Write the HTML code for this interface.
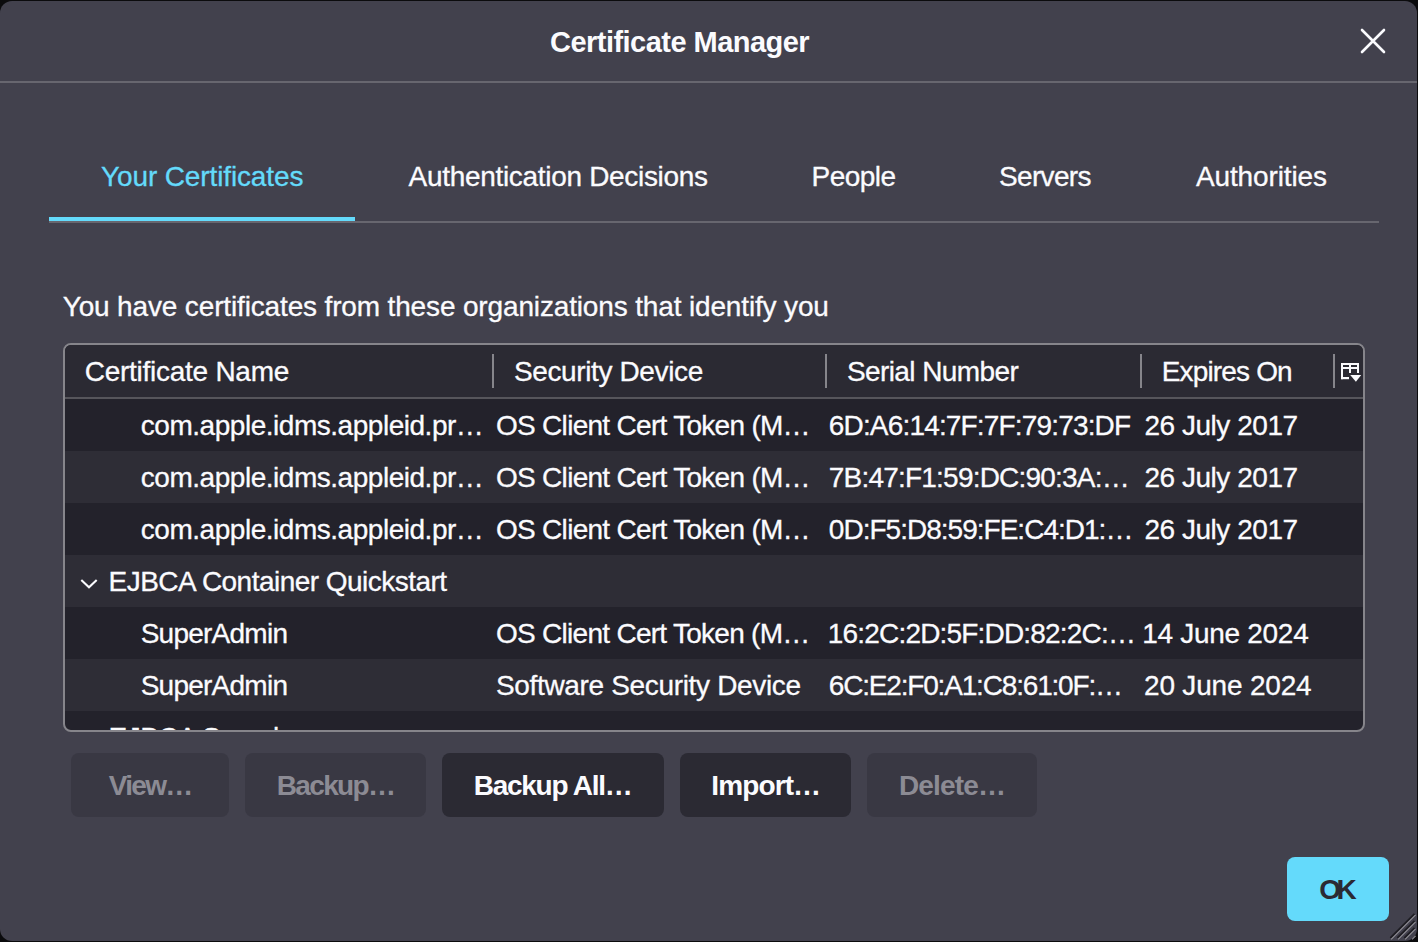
<!DOCTYPE html>
<html><head><meta charset="utf-8">
<style>
html,body{margin:0;padding:0;width:1418px;height:942px;overflow:hidden;background:#0b0b0d;}
*{box-sizing:border-box;}
body{font-family:"Liberation Sans",sans-serif;color:#fbfbfe;position:relative;}
.dlg{position:absolute;left:0;top:1px;width:1417px;height:940px;background:#42414d;border-radius:12px;}
.t{position:absolute;white-space:pre;line-height:1;}
.n{-webkit-text-stroke:0.3px currentColor;}
.r{position:absolute;}
</style></head>
<body>
<div class="dlg"></div>

<div class="r" style="left:0;top:81px;width:1417px;height:2px;background:#67666f"></div>
<div class="t" style="left:550.0px;top:27.9px;font-size:29px;font-weight:bold;color:#fbfbfe;letter-spacing:-0.528px">Certificate Manager</div>
<svg class="r" style="left:1356px;top:24px" width="34" height="34" viewBox="0 0 34 34"><path d="M6 6 L28 28 M28 6 L6 28" stroke="#fbfbfe" stroke-width="2.6" stroke-linecap="round"/></svg>
<div class="t n" style="left:101.0px;top:163.0px;font-size:28px;font-weight:normal;color:#64dafb;letter-spacing:-0.125px">Your Certificates</div>
<div class="t n" style="left:408.6px;top:163.0px;font-size:28px;font-weight:normal;color:#fbfbfe;letter-spacing:-0.313px">Authentication Decisions</div>
<div class="t n" style="left:811.5px;top:163.0px;font-size:28px;font-weight:normal;color:#fbfbfe;letter-spacing:-0.540px">People</div>
<div class="t n" style="left:999.0px;top:163.0px;font-size:28px;font-weight:normal;color:#fbfbfe;letter-spacing:-0.667px">Servers</div>
<div class="t n" style="left:1196.0px;top:163.0px;font-size:28px;font-weight:normal;color:#fbfbfe;letter-spacing:-0.140px">Authorities</div>
<div class="r" style="left:49px;top:221px;width:1330px;height:2px;background:#67666f"></div>
<div class="r" style="left:49px;top:217px;width:306px;height:4px;background:#64dafb"></div>
<div class="t n" style="left:62.7px;top:293.0px;font-size:28px;font-weight:normal;color:#fbfbfe;letter-spacing:-0.149px">You have certificates from these organizations that identify you</div>
<div class="r" style="left:63px;top:343px;width:1302px;height:389px;border:2px solid #86858b;border-radius:8px;background:#23222b;overflow:hidden">
<div class="r" style="left:0;top:0;width:1298px;height:52px;background:#2b2a33"></div>
<div class="r" style="left:0;top:52px;width:1298px;height:2px;background:#56555b"></div>
<div class="r" style="left:427px;top:9px;width:2px;height:34px;background:#86858b"></div>
<div class="r" style="left:760px;top:9px;width:2px;height:34px;background:#86858b"></div>
<div class="r" style="left:1075px;top:9px;width:2px;height:34px;background:#86858b"></div>
<div class="r" style="left:1268px;top:9px;width:2px;height:34px;background:#86858b"></div>
<div class="r" style="left:0;top:106px;width:1298px;height:52px;background:#2e2d36"></div>
<div class="r" style="left:0;top:210px;width:1298px;height:52px;background:#2e2d36"></div>
<div class="r" style="left:0;top:314px;width:1298px;height:52px;background:#2e2d36"></div>
<div class="t n" style="left:43.6px;top:378.9px;font-size:28px;color:#fbfbfe;letter-spacing:-0.532px">EJBCA Sample</div>
</div>
<svg class="r" style="left:1340px;top:362px" width="24" height="22" viewBox="0 0 24 22" fill="#fbfbfe"><rect x="1" y="1" width="18" height="2"/><rect x="1" y="5" width="18" height="2"/><rect x="1" y="1" width="2" height="16.2"/><rect x="9" y="1" width="2" height="10"/><rect x="17" y="1" width="2" height="10"/><rect x="1" y="15" width="8" height="2.2"/><path d="M10.2 13 H21.2 L15.9 19.7 Z"/></svg>
<div class="t n" style="left:84.7px;top:357.7px;font-size:28px;font-weight:normal;color:#fbfbfe;letter-spacing:-0.260px">Certificate Name</div>
<div class="t n" style="left:513.9px;top:357.7px;font-size:28px;font-weight:normal;color:#fbfbfe;letter-spacing:-0.371px">Security Device</div>
<div class="t n" style="left:846.9px;top:357.7px;font-size:28px;font-weight:normal;color:#fbfbfe;letter-spacing:-0.583px">Serial Number</div>
<div class="t n" style="left:1161.7px;top:357.7px;font-size:28px;font-weight:normal;color:#fbfbfe;letter-spacing:-0.833px">Expires On</div>
<div class="t n" style="left:140.8px;top:411.6px;font-size:28px;font-weight:normal;color:#fbfbfe;letter-spacing:-0.472px">com.apple.idms.appleid.pr…</div>
<div class="t n" style="left:496.0px;top:411.6px;font-size:28px;font-weight:normal;color:#fbfbfe;letter-spacing:-0.709px">OS Client Cert Token (M…</div>
<div class="t n" style="left:1144.4px;top:411.6px;font-size:28px;font-weight:normal;color:#fbfbfe;letter-spacing:-0.464px">26 July 2017</div>
<div class="t n" style="left:140.8px;top:463.6px;font-size:28px;font-weight:normal;color:#fbfbfe;letter-spacing:-0.472px">com.apple.idms.appleid.pr…</div>
<div class="t n" style="left:496.0px;top:463.6px;font-size:28px;font-weight:normal;color:#fbfbfe;letter-spacing:-0.709px">OS Client Cert Token (M…</div>
<div class="t n" style="left:1144.4px;top:463.6px;font-size:28px;font-weight:normal;color:#fbfbfe;letter-spacing:-0.464px">26 July 2017</div>
<div class="t n" style="left:140.8px;top:515.6px;font-size:28px;font-weight:normal;color:#fbfbfe;letter-spacing:-0.472px">com.apple.idms.appleid.pr…</div>
<div class="t n" style="left:496.0px;top:515.6px;font-size:28px;font-weight:normal;color:#fbfbfe;letter-spacing:-0.709px">OS Client Cert Token (M…</div>
<div class="t n" style="left:1144.4px;top:515.6px;font-size:28px;font-weight:normal;color:#fbfbfe;letter-spacing:-0.464px">26 July 2017</div>
<div class="t n" style="left:828.8px;top:411.6px;font-size:28px;font-weight:normal;color:#fbfbfe;letter-spacing:-0.832px">6D:A6:14:7F:7F:79:73:DF</div>
<div class="t n" style="left:828.8px;top:463.6px;font-size:28px;font-weight:normal;color:#fbfbfe;letter-spacing:-0.790px">7B:47:F1:59:DC:90:3A:…</div>
<div class="t n" style="left:828.8px;top:515.6px;font-size:28px;font-weight:normal;color:#fbfbfe;letter-spacing:-0.981px">0D:F5:D8:59:FE:C4:D1:…</div>
<div class="t n" style="left:108.6px;top:567.9px;font-size:28px;font-weight:normal;color:#fbfbfe;letter-spacing:-0.532px">EJBCA Container Quickstart</div>
<div class="t n" style="left:140.7px;top:619.6px;font-size:28px;font-weight:normal;color:#fbfbfe;letter-spacing:-0.756px">SuperAdmin</div>
<div class="t n" style="left:496.0px;top:619.6px;font-size:28px;font-weight:normal;color:#fbfbfe;letter-spacing:-0.722px">OS Client Cert Token (M…</div>
<div class="t n" style="left:827.8px;top:619.6px;font-size:28px;font-weight:normal;color:#fbfbfe;letter-spacing:-0.814px">16:2C:2D:5F:DD:82:2C:…</div>
<div class="t n" style="left:1142.3px;top:619.6px;font-size:28px;font-weight:normal;color:#fbfbfe;letter-spacing:-0.300px">14 June 2024</div>
<div class="t n" style="left:140.7px;top:671.6px;font-size:28px;font-weight:normal;color:#fbfbfe;letter-spacing:-0.756px">SuperAdmin</div>
<div class="t n" style="left:496.0px;top:671.6px;font-size:28px;font-weight:normal;color:#fbfbfe;letter-spacing:-0.335px">Software Security Device</div>
<div class="t n" style="left:828.8px;top:671.6px;font-size:28px;font-weight:normal;color:#fbfbfe;letter-spacing:-1.181px">6C:E2:F0:A1:C8:61:0F:…</div>
<div class="t n" style="left:1144.0px;top:671.6px;font-size:28px;font-weight:normal;color:#fbfbfe;letter-spacing:-0.191px">20 June 2024</div>
<svg class="r" style="left:78px;top:575.9px" width="22" height="16" viewBox="0 0 22 16"><path d="M3.3 4 L11 11.2 L18.7 4" fill="none" stroke="#fbfbfe" stroke-width="2.1"/></svg>
<div class="r" style="left:71px;top:753px;width:158px;height:64px;border-radius:8px;background:#393843"></div>
<div class="r" style="left:245px;top:753px;width:181px;height:64px;border-radius:8px;background:#393843"></div>
<div class="r" style="left:442px;top:753px;width:222px;height:64px;border-radius:8px;background:#2b2a33"></div>
<div class="r" style="left:680px;top:753px;width:171px;height:64px;border-radius:8px;background:#2b2a33"></div>
<div class="r" style="left:867px;top:753px;width:170px;height:64px;border-radius:8px;background:#393843"></div>
<div class="t" style="left:108.8px;top:771.6px;font-size:28px;font-weight:bold;color:#8c8b94;letter-spacing:-1.725px">View…</div>
<div class="t" style="left:276.8px;top:771.6px;font-size:28px;font-weight:bold;color:#8c8b94;letter-spacing:-1.667px">Backup…</div>
<div class="t" style="left:473.8px;top:771.6px;font-size:28px;font-weight:bold;color:#fbfbfe;letter-spacing:-1.280px">Backup All…</div>
<div class="t" style="left:711.3px;top:771.6px;font-size:28px;font-weight:bold;color:#fbfbfe;letter-spacing:-0.883px">Import…</div>
<div class="t" style="left:898.9px;top:771.6px;font-size:28px;font-weight:bold;color:#8c8b94;letter-spacing:-0.817px">Delete…</div>
<div class="r" style="left:1287px;top:857px;width:102px;height:64px;border-radius:8px;background:#64dafb"></div>
<div class="t" style="left:1319.2px;top:876.2px;font-size:28px;font-weight:bold;color:#2b2a33;letter-spacing:-4.500px">OK</div>
<svg class="r" style="left:1386px;top:910px" width="32" height="32" viewBox="0 0 32 32"><path d="M4.4 28 L28.5 3.9 M11.4 28 L28.5 10.9 M18.4 28 L28.5 17.9" stroke="#1e1d23" stroke-width="1.9"/><path d="M5.1 29.4 L29.6 4.9 M12.1 29.4 L29.6 11.9 M19.1 29.4 L29.6 18.9 M26.1 29.4 L29.6 25.9" stroke="#8f8e94" stroke-width="1.15"/></svg>
</body></html>
